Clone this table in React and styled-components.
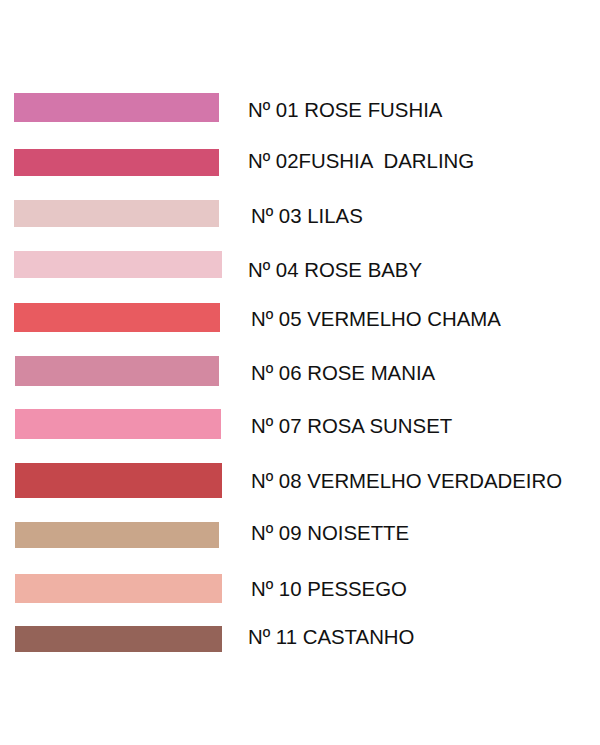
import React from 'react';
import styled, { createGlobalStyle } from 'styled-components';

const GlobalStyle = createGlobalStyle`
  html, body {
    margin: 0;
    padding: 0;
    background: #ffffff;
  }
`;

const Page = styled.div`
  width: 600px;
  height: 745px;
  background: #ffffff;
  font-family: 'Liberation Sans', Arial, sans-serif;
  display: flex;
  flex-direction: column;
  padding-top: 93px;
  box-sizing: border-box;
`;

const Row = styled.div`
  display: flex;
  align-items: flex-start;
  height: ${p => p.$h}px;
`;

const Swatch = styled.div`
  flex: none;
  margin-left: ${p => p.$x}px;
  margin-top: ${p => p.$y}px;
  width: ${p => p.$w}px;
  height: ${p => p.$hh}px;
  background: ${p => p.$color};
`;

const Label = styled.span`
  margin-left: ${p => p.$x}px;
  margin-top: ${p => p.$y}px;
  font-size: 20.4px;
  line-height: 20px;
  color: #111111;
  white-space: pre;
`;

// sx/sy/sw/sh = swatch box, tx/ty = label left and line-box top
const shades = [
  { name: 'Nº 01 ROSE FUSHIA', color: '#d376aa', sx: 14, sy: 93, sw: 205, sh: 29, tx: 248, ty: 100 },
  { name: 'Nº 02FUSHIA  DARLING', color: '#d24f72', sx: 14, sy: 149, sw: 205, sh: 27, tx: 248, ty: 151 },
  { name: 'Nº 03 LILAS', color: '#e6c7c6', sx: 14, sy: 200, sw: 205, sh: 27, tx: 251, ty: 206 },
  { name: 'Nº 04 ROSE BABY', color: '#efc4cd', sx: 14, sy: 251, sw: 208, sh: 27, tx: 248, ty: 260 },
  { name: 'Nº 05 VERMELHO CHAMA', color: '#e85b60', sx: 14, sy: 303, sw: 206, sh: 29, tx: 251, ty: 309 },
  { name: 'Nº 06 ROSE MANIA', color: '#d389a1', sx: 15, sy: 356, sw: 204, sh: 30, tx: 251, ty: 363 },
  { name: 'Nº 07 ROSA SUNSET', color: '#f191ae', sx: 15, sy: 409, sw: 206, sh: 30, tx: 251, ty: 416 },
  { name: 'Nº 08 VERMELHO VERDADEIRO', color: '#c4474b', sx: 15, sy: 463, sw: 207, sh: 35, tx: 251, ty: 471 },
  { name: 'Nº 09 NOISETTE', color: '#c9a68a', sx: 15, sy: 522, sw: 204, sh: 26, tx: 251, ty: 523 },
  { name: 'Nº 10 PESSEGO', color: '#efb1a4', sx: 15, sy: 574, sw: 207, sh: 29, tx: 251, ty: 579 },
  { name: 'Nº 11 CASTANHO', color: '#946358', sx: 15, sy: 626, sw: 207, sh: 26, tx: 248, ty: 627 },
];

const App = () => {
  return (
    <>
      <GlobalStyle />
      <Page>
        {shades.map((s, i) => {
          const top = Math.min(s.sy, s.ty);
          const next = shades[i + 1] ? Math.min(shades[i + 1].sy, shades[i + 1].ty) : 660;
          return (
            <Row key={s.name} $h={next - top}>
              <Swatch $x={s.sx} $y={s.sy - top} $w={s.sw} $hh={s.sh} $color={s.color} />
              <Label $x={s.tx - s.sx - s.sw} $y={s.ty - top}>{s.name}</Label>
            </Row>
          );
        })}
      </Page>
    </>
  );
};

export default App;
